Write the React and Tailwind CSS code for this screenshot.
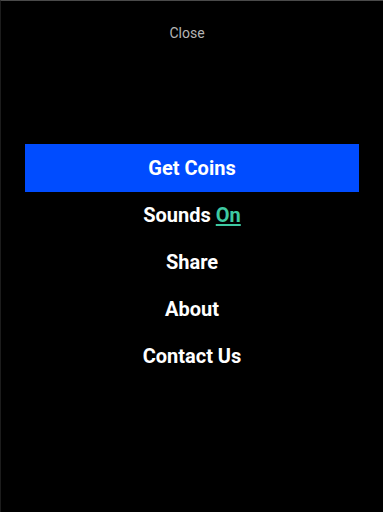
export default function App() {
  const items = ["Share", "About", "Contact Us"];
  return (
    <div
      className="w-[383px] h-[512px] bg-black border-t border-t-[#4a4a4a] border-l border-l-[#1c1c1c] flex flex-col items-center overflow-hidden"
      style={{ fontFamily: "Roboto, 'Noto Sans', sans-serif" }}
    >
      <div className="mt-[22px] mr-[10px] h-[20px] leading-[20px] text-[14px] text-[#b5b5b5]">Close</div>
      <div className="mt-[101px] w-full flex flex-col items-center">
        <div className="w-[334px] h-[48px] bg-[#004cff] flex items-center justify-center text-white font-bold text-[20px]">
          Get Coins
        </div>
        <div className="h-[46px] flex items-center justify-center text-white font-bold text-[20px]">
          Sounds&nbsp;<span className="text-[#3ec9a2] underline underline-offset-2">On</span>
        </div>
        {items.map((t) => (
          <div key={t} className="h-[47px] flex items-center justify-center text-white font-bold text-[20px]">
            {t}
          </div>
        ))}
      </div>
    </div>
  );
}
